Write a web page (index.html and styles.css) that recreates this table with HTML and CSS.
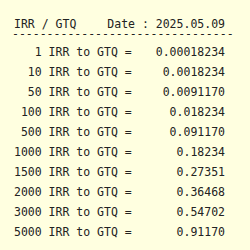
FILE: index.html
```html
<!DOCTYPE html>
<html>
<head>
<meta charset="utf-8">
<link rel="stylesheet" href="styles.css">
</head>
<body>
<div class="widget">
  <div class="head"><span>IRR / GTQ</span><span>Date : 2025.05.09</span></div>
  <div class="rule">--------------------------------</div>
  <div class="rows">
    <div class="row"><span class="amt">1</span><span>IRR to GTQ =</span><span class="val">0.00018234</span></div>
    <div class="row"><span class="amt">10</span><span>IRR to GTQ =</span><span class="val">0.0018234</span></div>
    <div class="row"><span class="amt">50</span><span>IRR to GTQ =</span><span class="val">0.0091170</span></div>
    <div class="row"><span class="amt">100</span><span>IRR to GTQ =</span><span class="val">0.018234</span></div>
    <div class="row"><span class="amt">500</span><span>IRR to GTQ =</span><span class="val">0.091170</span></div>
    <div class="row"><span class="amt">1000</span><span>IRR to GTQ =</span><span class="val">0.18234</span></div>
    <div class="row"><span class="amt">1500</span><span>IRR to GTQ =</span><span class="val">0.27351</span></div>
    <div class="row"><span class="amt">2000</span><span>IRR to GTQ =</span><span class="val">0.36468</span></div>
    <div class="row"><span class="amt">3000</span><span>IRR to GTQ =</span><span class="val">0.54702</span></div>
    <div class="row"><span class="amt">5000</span><span>IRR to GTQ =</span><span class="val">0.91170</span></div>
  </div>
</div>
</body>
</html>
```
FILE: styles.css
```css
html, body {
  margin: 0;
  background: #ffffe0;
}
body {
  font-family: "DejaVu Sans Mono", monospace;
  font-size: 11.5px;
  color: #222;
}
.widget {
  width: 211px;
  padding: 18px 0 0 14px;
}
.head {
  display: flex;
  justify-content: space-between;
  line-height: 12px;
  white-space: pre;
}
.rule {
  line-height: 8px;
  height: 8px;
  margin-left: -2px;
  white-space: pre;
}
.rows {
  margin-top: 4px;
}
.row {
  display: grid;
  grid-template-columns: 4ch auto 1fr;
  column-gap: 1ch;
  line-height: 20px;
  white-space: pre;
}
.amt, .val {
  text-align: right;
}
```
